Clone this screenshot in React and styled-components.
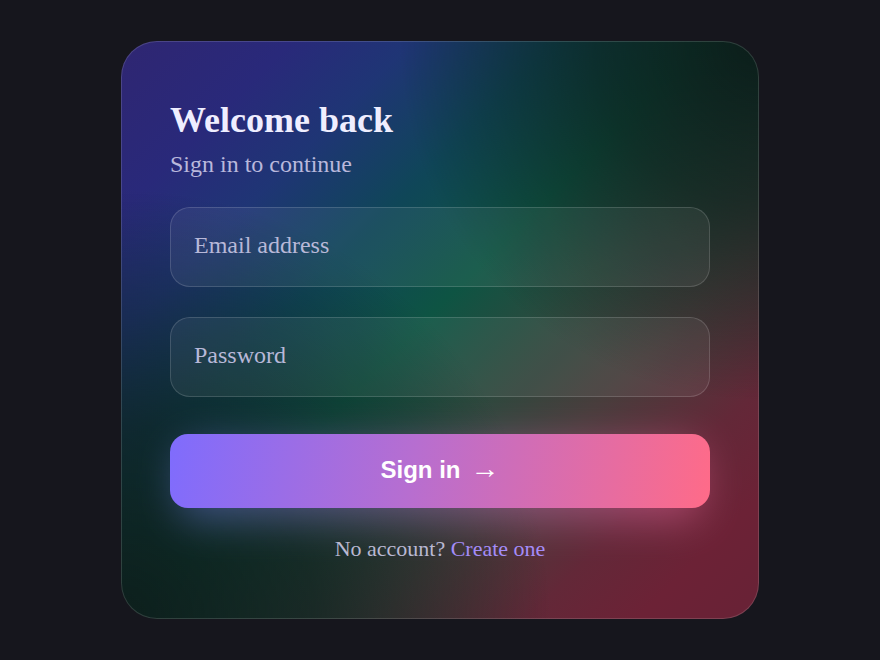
import React from 'react';
import styled, { createGlobalStyle } from 'styled-components';

const GlobalStyle = createGlobalStyle`
  * {
    box-sizing: border-box;
  }
  body {
    margin: 0;
    background: #16161d;
    font-family: "Liberation Serif", "Times New Roman", serif;
  }
`;

const Page = styled.div`
  min-height: 100vh;
  display: flex;
  align-items: center;
  justify-content: center;
`;

const Card = styled.form`
  isolation: isolate;
  width: 638px;
  padding: 57px 48px 53px;
  border-radius: 36px;
  border: 1px solid rgba(255, 255, 255, 0.14);
  background:
    radial-gradient(circle 360px at 100% 0%, rgba(11, 28, 25, 0.97) 0%, rgba(11, 30, 26, 0.65) 45%, rgba(11, 30, 26, 0) 100%),
    radial-gradient(circle 430px at 0% 100%, rgba(13, 29, 27, 0.97) 0%, rgba(13, 30, 28, 0.7) 45%, rgba(13, 30, 28, 0) 100%),
    linear-gradient(135deg, #2f2672 0%, #29297a 14%, #1f3575 24%, #0f4658 36%, #0e5443 48%, #2b4a3e 58%, #483d3c 69%, #632838 81%, #6c2236 90%, #682236 100%);
  background-origin: border-box;
  display: flex;
  flex-direction: column;
`;

const Title = styled.h1`
  margin: 0;
  font-size: 36px;
  line-height: 1.2;
  font-weight: 700;
  color: #efeeff;
`;

const Subtitle = styled.p`
  margin: 6px 0 0;
  font-size: 24px;
  line-height: 1.4;
  color: #b9b8dc;
`;

const Fields = styled.div`
  display: flex;
  flex-direction: column;
  gap: 30px;
  margin-top: 26px;
`;

const Field = styled.input`
  height: 80px;
  width: 100%;
  padding: 0 24px 4px 23px;
  border-radius: 20px;
  border: 1px solid rgba(255, 255, 255, 0.15);
  background: rgba(255, 255, 255, 0.06);
  font-family: "Liberation Serif", "Times New Roman", serif;
  font-size: 24px;
  color: #efeeff;
  outline: none;

  &::placeholder {
    color: #b8b8d8;
  }
`;

const Submit = styled.button`
  position: relative;
  margin-top: 37px;
  height: 74px;
  width: 100%;
  display: flex;
  align-items: center;
  justify-content: center;
  gap: 10px;
  padding: 0 0 2px;
  border: none;
  border-radius: 18px;
  background: linear-gradient(100deg, #7f6cfd 0%, #b76ed0 45%, #ff6b88 100%);
  color: #ffffff;
  font-family: "Liberation Sans", Arial, sans-serif;
  font-size: 24px;
  font-weight: 700;
  line-height: 1;
  cursor: pointer;

  &::before {
    content: '';
    position: absolute;
    inset: 10px 8px -12px;
    border-radius: 18px;
    background: linear-gradient(100deg, #6f80f0, #ff6ba0);
    filter: blur(20px);
    opacity: 0.45;
    z-index: -1;
  }
`;

const Arrow = styled.span`
  font-size: 29px;
  font-weight: 400;
  line-height: 1;
  position: relative;
  top: -2px;
`;

const Footer = styled.p`
  margin: 26px 0 0;
  text-align: center;
  font-size: 22px;
  line-height: 1.4;
  color: #b9b8d2;
`;

const Link = styled.a`
  color: #a48cf8;
  text-decoration: none;
`;

export default function App() {
  return (
    <>
      <GlobalStyle />
      <Page>
        <Card onSubmit={(e) => e.preventDefault()}>
          <Title>Welcome back</Title>
          <Subtitle>Sign in to continue</Subtitle>
          <Fields>
            <Field type="email" placeholder="Email address" />
            <Field type="password" placeholder="Password" />
          </Fields>
          <Submit type="submit">
            <span>Sign in</span>
            <Arrow>→</Arrow>
          </Submit>
          <Footer>
            No account? <Link href="#">Create one</Link>
          </Footer>
        </Card>
      </Page>
    </>
  );
}
